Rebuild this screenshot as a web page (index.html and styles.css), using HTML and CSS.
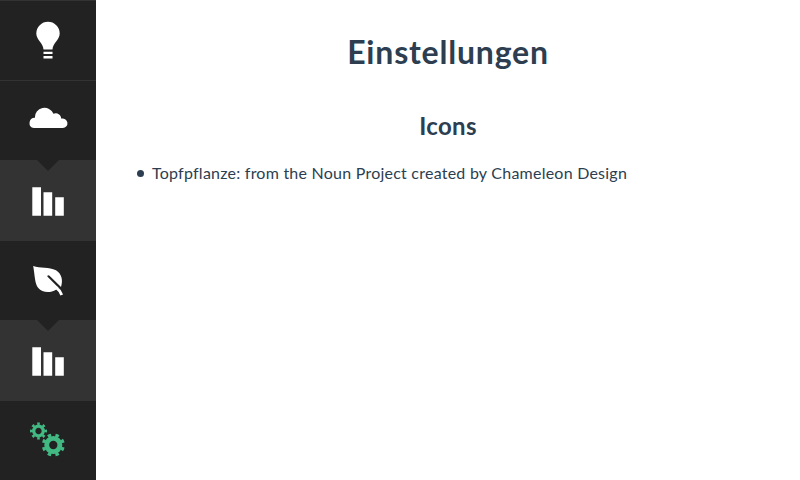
FILE: index.html
```html
<!DOCTYPE html>
<html lang="de">
<head>
<meta charset="utf-8">
<title>Einstellungen</title>
<link rel="stylesheet" href="styles.css">
</head>
<body>
<nav class="sidebar">
  <a class="item"><svg viewBox="0 0 96 79"><path d="M43.500 48.500C43.300 42 36.300 39 36.300 32.500a11.700 11.700 0 0 1 23.400 0C59.700 39 52.700 42 52.500 48.500zM43.500 50.800h9v2.300h-9zM43.500 55h9v2.400h-9z"/></svg></a>
  <a class="item"><svg viewBox="0 0 96 79"><path d="M34.200 47a5.200 5.200 0 0 1 1-10.300A9.400 9.400 0 0 1 53.300 32.700a5.300 5.300 0 0 1 7.400 4.900A4.800 4.800 0 1 1 62.300 47z" transform="translate(-1.400) scale(1.030 1)"/></svg></a>
  <a class="item sub"><svg viewBox="0 0 96 80"><path d="M32.300 27.300h8.700v28.500h-8.700zM43.500 32.200h8.700v23.600h-8.700zM55.200 37.200h8.600v18.600h-8.600z"/></svg></a>
  <a class="item"><svg viewBox="0 0 96 79"><path d="M33.200 25C40 27.800 49 25.600 56 29.300C61.500 32.800 63.300 39 61 46L49.500 34.700Q47.600 33.500 47.300 35.500L58.500 46.800 56 48.700C50 52.500 42 51.600 38.300 47C34.600 42.500 35 35 33.200 25z"/><path class="stem" d="M55.800 46.200Q60 49.500 61.700 54"/></svg></a>
  <a class="item sub"><svg viewBox="0 0 96 80"><path d="M32.300 27.300h8.700v28.500h-8.700zM43.500 32.200h8.700v23.600h-8.700zM55.200 37.200h8.600v18.600h-8.600z"/></svg></a>
  <a class="item active"><svg viewBox="0 0 96 79"><g class="gear"><g transform="translate(38.500 30)"><circle r="4.800" stroke-width="3.300"/><circle r="7.100" stroke-width="2.800" pathLength="16" stroke-dasharray=".9 1.100" stroke-dashoffset=".45"/></g><g transform="translate(53.300 44)"><circle r="6.600" stroke-width="4.900"/><circle r="9.900" stroke-width="3.200" pathLength="16" stroke-dasharray=".9 1.100" stroke-dashoffset="-.55"/></g></g></svg></a>
</nav>
<main class="content">
  <h1>Einstellungen</h1>
  <h2>Icons</h2>
  <ul><li><span>Topfpflanze: from the Noun Project created by Chameleon Design</span></li></ul>
</main>
</body>
</html>
```
FILE: styles.css
```css
* { box-sizing: border-box; }
body {
  margin: 0;
  height: 480px;
  display: flex;
  overflow: hidden;
  background: #fff;
  color: #2c3e50;
  font-family: Lato, sans-serif;
}
.sidebar { width: 96px; flex: none; height: 480px; overflow: hidden; background: #222; }
.item { display: block; position: relative; height: 80px; border-top: 1px solid #333; background: #222; }
.item svg { display: block; width: 96px; height: 79px; fill: #fff; }
.sub { height: 81px; border-top: 0; background: #333; }
.sub svg { height: 80px; }
.sub + .item { height: 79px; border-top: 0; }
.sub::before {
  content: "";
  position: absolute;
  top: 0;
  left: 37px;
  border: solid transparent;
  border-width: 11px 11px 0;
  border-top-color: #222;
}
.item .stem { fill: none; stroke: #fff; stroke-width: 2.900; }
.item .gear { fill: none; stroke: #42b983; }
.content { flex: 1; padding-top: 33px; }
h1, h2 { margin: 0; text-align: center; font-weight: 700; }
h1 { font-size: 32px; line-height: 38px; letter-spacing: .8px; }
h2 { margin-top: 41px; font-size: 24px; line-height: 28px; letter-spacing: .3px; }
ul { margin: 23px 0 0; padding: 0 0 0 42px; list-style: none; }
li { display: flex; align-items: center; font-size: 16px; line-height: 20px; letter-spacing: .235px; white-space: nowrap; }
li::before { content: ""; width: 7px; height: 7px; margin: 0 8px 0 -1px; border-radius: 50%; background: #2c3e50; }
```
